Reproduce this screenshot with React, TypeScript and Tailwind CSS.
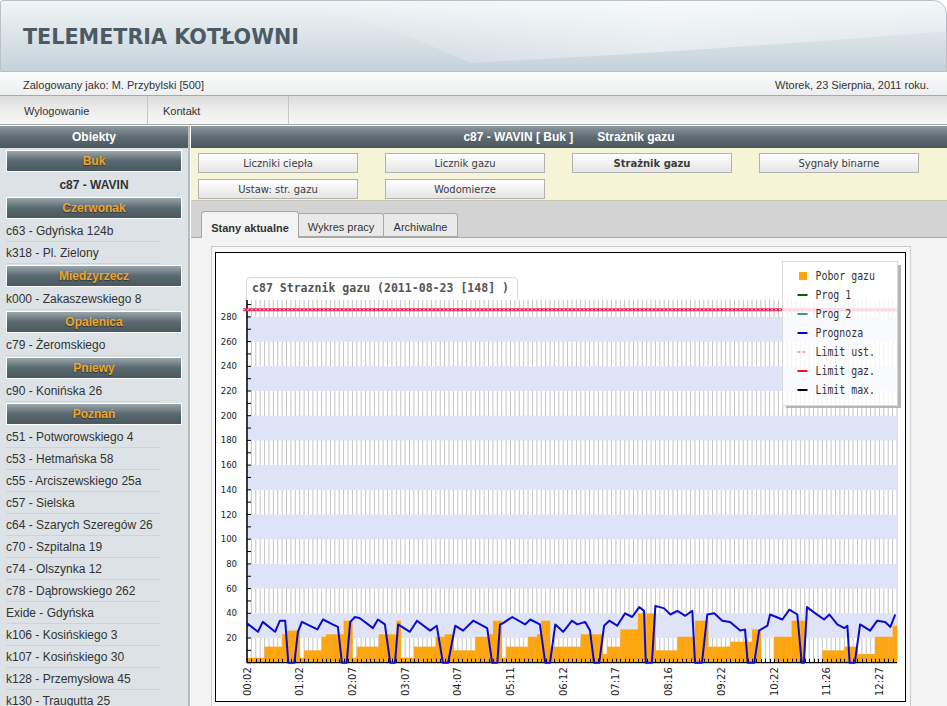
import React from "react";

type Row = ["g" | "a" | "i", string];

const rows: Row[] = [
  ["g", "Buk"],
  ["a", "c87 - WAVIN"],
  ["g", "Czerwonak"],
  ["i", "c63 - Gdyńska 124b"],
  ["i", "k318 - Pl. Zielony"],
  ["g", "Miedzyrzecz"],
  ["i", "k000 - Zakaszewskiego 8"],
  ["g", "Opalenica"],
  ["i", "c79 - Żeromskiego"],
  ["g", "Pniewy"],
  ["i", "c90 - Konińska 26"],
  ["g", "Poznań"],
  ["i", "c51 - Potworowskiego 4"],
  ["i", "c53 - Hetmańska 58"],
  ["i", "c55 - Arciszewskiego 25a"],
  ["i", "c57 - Sielska"],
  ["i", "c64 - Szarych Szeregów 26"],
  ["i", "c70 - Szpitalna 19"],
  ["i", "c74 - Olszynka 12"],
  ["i", "c78 - Dąbrowskiego 262"],
  ["i", "Exide - Gdyńska"],
  ["i", "k106 - Kosińskiego 3"],
  ["i", "k107 - Kosińskiego 30"],
  ["i", "k128 - Przemysłowa 45"],
  ["i", "k130 - Traugutta 25"],
];

const buttons: [string, boolean][] = [
  ["Liczniki ciepła", false],
  ["Licznik gazu", false],
  ["Strażnik gazu", true],
  ["Sygnały binarne", false],
  ["Ustaw: str. gazu", false],
  ["Wodomierze", false],
];

// chart geometry (page coordinates)
const X0 = 247;
const X1 = 897;
const Y0 = 662.7;
const K = 1.235;
const N = 148;
const DX = (X1 - X0) / N;
const yv = (v: number) => Y0 - v * K;

// orange bars: [from, to, value]
const barSegs: [number, number, number][] = [
  [0, 3, 4], [4, 7, 13], [8, 8, 23], [9, 11, 26], [12, 12, 4], [13, 16, 10],
  [17, 17, 21], [18, 21, 23], [22, 23, 34], [24, 24, 4], [25, 29, 13], [30, 33, 23],
  [34, 34, 34], [35, 37, 4], [38, 42, 13], [43, 44, 21], [45, 46, 23], [47, 51, 10],
  [52, 54, 21], [55, 55, 23], [56, 57, 34], [58, 58, 4], [59, 63, 13], [64, 65, 21],
  [66, 66, 23], [67, 68, 34], [69, 75, 13], [76, 80, 23], [81, 81, 7], [82, 84, 13],
  [85, 88, 27], [89, 92, 40], [93, 97, 10], [98, 101, 21], [102, 104, 34], [105, 109, 13],
  [110, 114, 17], [115, 116, 27], [117, 119, 0], [120, 123, 21], [124, 126, 34],
  [127, 130, 0], [131, 135, 10], [136, 138, 13], [139, 142, 7], [143, 146, 21], [147, 147, 30],
];
const bars: number[] = new Array(N).fill(0);
barSegs.forEach(([a, b, v]) => {
  for (let i = a; i <= b; i++) bars[i] = v;
});

const blue: [number, number][] = [
  [0, 32], [2.5, 25], [3.6, 33], [6.4, 25], [7.5, 34], [8.7, 34], [9.4, 0], [10.8, 0],
  [11.6, 25], [12.5, 33], [16, 27], [17.3, 35], [19.5, 31], [20.7, 29], [21.6, 0], [22.7, 0],
  [23.5, 33], [24.6, 37], [25.7, 36], [28.7, 28], [29.8, 35], [31.4, 31], [32.6, 0], [33.7, 0],
  [34.4, 31], [37.1, 25], [38.7, 34], [41.7, 26], [43.2, 30], [44.6, 0], [45.8, 0], [47.4, 30],
  [49.2, 26], [51.5, 34], [54.7, 28], [55.8, 0], [57, 0], [57.6, 31], [58.3, 32], [60.4, 37],
  [63.3, 31], [64.5, 35], [66.7, 31], [67.9, 0], [69, 0], [70.2, 31], [72, 25], [74, 34],
  [75.2, 31], [77, 33], [78.1, 26], [79, 0], [80.2, 0], [81.3, 30], [82.5, 34], [84.3, 30],
  [86.1, 40], [87.7, 37], [89.3, 45], [90.4, 42], [90.8, 0], [92.2, 0], [93, 46], [95, 44],
  [96.4, 39], [98, 42], [99.8, 38], [101.4, 42], [102, 0], [103.6, 0], [104.8, 39], [106.4, 40],
  [108.2, 34], [110, 33], [112.3, 26], [113.4, 27], [114, 0], [115.5, 0], [116.6, 26], [118.5, 30],
  [119.1, 39], [121.9, 35], [123.5, 43], [125.3, 39], [126.3, 0], [126.8, 0], [127.5, 45], [129, 41],
  [131.4, 35], [132.6, 39], [134.4, 31], [136, 28], [136.7, 30], [137.2, 0], [138.4, 0], [139.6, 31],
  [141.9, 26], [143.5, 34], [145.3, 33], [146.5, 29], [147.6, 39],
];

const xLabels = ["00:02", "01:02", "02:07", "03:07", "04:07", "05:11", "06:12", "07:17", "08:16", "09:22", "10:22", "11:26", "12:27"];

const legend: [string, string, string][] = [
  ["Pobor gazu", "box", "#ffa510"],
  ["Prog 1", "line", "#006400"],
  ["Prog 2", "line", "#3d9a78"],
  ["Prognoza", "line", "#0000dd"],
  ["Limit ust.", "dash", "#e6a3d8"],
  ["Limit gaz.", "line", "#ee1111"],
  ["Limit max.", "line", "#000000"],
];

function Chart() {
  const topV = 294;
  const grid = [];
  for (let i = 0; i <= N; i++) {
    const x = X0 + i * DX;
    grid.push(<line key={i} x1={x} x2={x} y1={yv(topV)} y2={Y0} stroke="#c4c4c4" strokeWidth={1} />);
  }
  const bands = [];
  for (let b = 20; b <= 260; b += 40) {
    bands.push(<rect key={b} x={X0 + 1} y={yv(b + 20)} width={X1 - X0 - 1} height={20 * K} fill="#dee3f7" />);
  }
  const ticks = [];
  for (let v = 0; v <= 290; v += 10) {
    ticks.push(<line key={v} x1={X0} x2={X0 + 4} y1={yv(v)} y2={yv(v)} stroke="#000" strokeWidth={1} />);
  }
  const yLabels = [];
  for (let v = 20; v <= 280; v += 20) {
    yLabels.push(
      <text key={v} x={237} y={yv(v) + 3} textAnchor="end" fontSize={8.5} fill="#222" fontFamily="DejaVu Sans, sans-serif">
        {v}
      </text>
    );
  }
  const pts = blue.map(([i, v]) => `${(X0 + i * DX).toFixed(1)},${yv(v).toFixed(1)}`).join(" ");

  return (
    <svg width={689} height={448} viewBox="216 253 689 448" className="block">
      <rect x={216} y={253} width={689} height={448} fill="#fff" />
      {grid}
      {bands}
      {bars.map((v, i) =>
        v > 0 ? (
          <rect key={i} x={X0 + i * DX} y={yv(v)} width={DX + 0.2} height={v * K} fill="#ffa510" />
        ) : null
      )}
      {bars.map((_, i) => {
        const x = Math.round(X0 + i * DX) + 0.5;
        return <line key={i} x1={x} x2={x} y1={Y0 - 4} y2={Y0} stroke="#000" strokeWidth={1} />;
      })}
      <line x1={X0} x2={X0} y1={yv(topV)} y2={Y0} stroke="#000" strokeWidth={1.5} />
      <line x1={X0} x2={X1} y1={Y0} y2={Y0} stroke="#000" strokeWidth={1.2} />
      {ticks}
      {yLabels}
      {/* limit line */}
      <line x1={X0 - 4} x2={X1} y1={309.7} y2={309.7} stroke="#e3285a" strokeWidth={3} />
      <line x1={X0 - 4} x2={X1} y1={309.7} y2={309.7} stroke="#ff9cc8" strokeWidth={1.2} strokeDasharray="2 2" />
      <polyline points={pts} fill="none" stroke="#0a0ad0" strokeWidth={2} strokeLinejoin="round" />
      {xLabels.map((l, k) => (
        <text
          key={l}
          transform={`translate(${(X0 + k * 12 * DX + 3.5).toFixed(1)},696) rotate(-90)`}
          fontSize={10}
          fill="#222"
          fontFamily="DejaVu Sans, sans-serif"
        >
          {l}
        </text>
      ))}
      {/* title tab */}
      <path d="M246.5 300 V281 Q246.5 277.5 250 277.5 H514 Q517.5 277.5 517.5 281 V300" fill="#fff" stroke="#d6d6d6" strokeWidth={1} />
      <text x={252} y={292} fontSize={12} fill="#555" fontWeight="bold" fontFamily="DejaVu Sans Mono, monospace" textLength={257} lengthAdjust="spacingAndGlyphs">
        c87 Straznik gazu (2011-08-23 [148] )
      </text>
      {/* legend */}
      <rect x={897} y={265} width={4} height={143} fill="#b5b5b5" />
      <rect x={786} y={405} width={115} height={3} fill="#b5b5b5" />
      <rect x={782.5} y={261.5} width={115} height={144} fill="#fff" fillOpacity={0.8} stroke="#dadada" />
      {legend.map(([label, kind, color], k) => {
        const cy = 276 + k * 19;
        return (
          <g key={label}>
            {kind === "box" && <rect x={799} y={cy - 4} width={8} height={8} fill={color} />}
            {kind === "line" && <line x1={797.5} x2={807.5} y1={cy} y2={cy} stroke={color} strokeWidth={2} />}
            {kind === "dash" && <line x1={797.5} x2={807.5} y1={cy} y2={cy} stroke={color} strokeWidth={2} strokeDasharray="3 2" />}
            <text x={815.5} y={cy + 4} fontSize={11.5} fill="#333" fontFamily="DejaVu Sans Mono, monospace" textLength={label.length * 5.95} lengthAdjust="spacingAndGlyphs">
              {label}
            </text>
          </g>
        );
      })}
    </svg>
  );
}

export default function App() {
  return (
    <div className="w-[947px] h-[706px] overflow-hidden bg-white font-['Liberation_Sans',Arial,sans-serif] text-[#333]">
      {/* header */}
      <div className="relative h-[72px] border border-[#b7c1c6] rounded-tr-[14px] rounded-tl-[3px] overflow-hidden bg-gradient-to-b from-[#f1f5f7] to-[#c4d2d9]">
        <svg className="absolute inset-0" width="947" height="72" viewBox="0 0 947 72" preserveAspectRatio="none">
          <defs>
            <linearGradient id="sw" x1="0" y1="0" x2="1" y2="0">
              <stop offset="0" stopColor="#ffffff" stopOpacity="0" />
              <stop offset="0.55" stopColor="#ffffff" stopOpacity="0.45" />
              <stop offset="1" stopColor="#ffffff" stopOpacity="0.25" />
            </linearGradient>
          </defs>
          <path d="M300 0 H947 V30 C800 42 650 52 470 62 C420 40 360 15 300 0 Z" fill="url(#sw)" />
        </svg>
        <div className="relative pl-[22px] pt-[26px] text-[20.7px] leading-[21px] font-bold text-[#4b5b65] font-['DejaVu_Sans',Verdana,sans-serif]">
          TELEMETRIA KOTŁOWNI
        </div>
      </div>
      {/* user bar */}
      <div className="h-[24px] flex items-end justify-between pb-[2px] pl-[23px] pr-[18px] text-[11px] text-[#333] bg-gradient-to-b from-[#fbfcfc] to-[#eceeef] border-b border-[#a5aaad]">
        <span>Zalogowany jako: M. Przybylski [500]</span>
        <span>Wtorek, 23 Sierpnia, 2011 roku.</span>
      </div>
      {/* nav */}
      <div className="h-[29px] flex text-[11px] text-[#333] bg-gradient-to-b from-[#dcdcdc] via-[#ededed] to-[#f7f7f7] border-b border-[#a3a3a3]">
        <div className="w-[148px] pl-[24px] pt-[3px] flex items-center border-r border-[#c6c6c6]">Wylogowanie</div>
        <div className="w-[141px] pl-[15px] pt-[3px] flex items-center border-r border-[#c6c6c6]">Kontakt</div>
      </div>
      {/* body */}
      <div className="flex pt-[1px]">
        {/* sidebar */}
        <div className="w-[190px] h-[582px] bg-[#dce2e5] border-r-2 border-[#b3bcc0] overflow-hidden">
          <div className="h-[22px] flex items-center justify-center text-[12px] font-bold text-white bg-gradient-to-b from-[#8d9aa0] via-[#5d6c73] to-[#4a5860]">
            Obiekty
          </div>
          <div className="h-[1px]" />
          {rows.map(([t, label]) =>
            t === "g" ? (
              <div
                key={label}
                className="my-[1px] mx-[6px] h-[22px] border border-white flex items-center justify-center text-[12px] font-bold text-[#eea52c] [text-shadow:0_1px_1px_#333] bg-gradient-to-b from-[#9aa6ab] via-[#5a6970] to-[#4a5860]"
              >
                {label}
              </div>
            ) : t === "a" ? (
              <div key={label} className="h-[23px] flex items-center justify-center text-[12px] font-bold text-[#333]">
                {label}
              </div>
            ) : (
              <div key={label} className="h-[22px] ml-[6px] mr-[28px] flex items-center border-b border-[#cdd4d8] text-[12px] text-[#333] whitespace-nowrap">
                {label}
              </div>
            )
          )}
        </div>
        {/* main */}
        <div className="ml-[1px] flex-1 flex flex-col">
          <div className="h-[22px] flex items-center justify-center gap-[24px] text-[12px] font-bold text-white bg-gradient-to-b from-[#8d9aa0] via-[#5d6c73] to-[#4a5860]">
            <span>c87 - WAVIN [ Buk ]</span>
            <span>Strażnik gazu</span>
          </div>
          <div className="h-[53px] bg-[#f6f4d6] border-b border-[#c9c8b4] pl-[7px] pt-[5px]">
            <div className="grid grid-cols-[160px_160px_160px_160px] gap-x-[27px] gap-y-[6px]">
              {buttons.map(([label, active]) => (
                <div
                  key={label}
                  className={
                    "h-[20px] flex items-center justify-center border border-[#b2b2b2] bg-gradient-to-b from-white to-[#e4e4e4] text-[10px] text-[#3c3c3c] font-['DejaVu_Sans',Verdana,sans-serif] " +
                    (active ? "font-bold" : "")
                  }
                >
                  {label}
                </div>
              ))}
            </div>
          </div>
          <div className="h-[37px] bg-[#d3d3d3] flex items-end pl-[10px] border-b border-[#a9a9a9]">
            <div className="w-[98px] h-[27px] -mb-[1px] pb-[2px] leading-[16px] bg-[#f3f3f3] border border-b-0 border-[#a8a8a8] rounded-t-[4px] flex items-end justify-center text-[11px] font-bold text-[#333]">
              Stany aktualne
            </div>
            <div className="w-[85px] h-[24px] pb-[1px] leading-[16px] bg-[#e9e9e9] border border-l-0 border-[#a8a8a8] rounded-tr-[3px] flex items-end justify-center text-[11px] text-[#333]">
              Wykres pracy
            </div>
            <div className="w-[74px] h-[24px] pb-[1px] leading-[16px] bg-[#e9e9e9] border border-l-0 border-[#a8a8a8] rounded-tr-[3px] flex items-end justify-center text-[11px] text-[#333]">
              Archiwalne
            </div>
          </div>
          <div className="flex-1 bg-[#f3f3f3] pl-[20px] pt-[8px]">
            <div className="w-[700px] h-[470px] border border-[#cbcbcb] bg-[#f8f8f8] pl-[3px] pt-[5px]">
              <div className="w-[691px] h-[450px] border border-black bg-white">
                <Chart />
              </div>
            </div>
          </div>
        </div>
      </div>
    </div>
  );
}
